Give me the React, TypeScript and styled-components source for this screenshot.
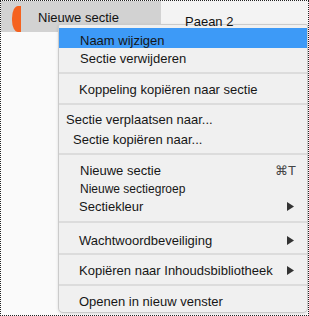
import React from "react";
import styled, { createGlobalStyle } from "styled-components";

const Global = createGlobalStyle`
  html, body { margin: 0; padding: 0; background: #fafafa; }
  body { font-family: "Liberation Sans", Arial, sans-serif; }
`;

const Frame = styled.div`
  position: relative;
  box-sizing: border-box;
  width: 309px;
  height: 316px;
  border: 1px dotted #222;
  background: #fafafa;
  overflow: hidden;
`;

const TopBar = styled.div`
  display: flex;
  height: 31px;
`;

const Tab = styled.div`
  display: flex;
  align-items: center;
  width: 160px;
  background: #d2d2d2;
  padding-left: 11px;
  box-sizing: border-box;
  gap: 17px;
  font-size: 13px;
  color: #111;
`;

const Marker = styled.div`
  width: 9px;
  height: 26px;
  margin-top: 4px;
  background: #f5621f;
  border-radius: 6px 0 0 6px / 12px 0 0 12px;
`;

const TabLabel = styled.span`
  margin-top: 1px;
`;

const Rest = styled.div`
  flex: 1;
  background: #f3f3f3;
  padding-left: 24px;
  padding-top: 13px;
  font-size: 13px;
  color: #111;
`;

const PageLabel = styled.span`
  position: relative;
  z-index: 2;
`;

const Menu = styled.div`
  position: absolute;
  z-index: 1;
  left: 57px;
  top: 23px;
  right: 0;
  box-sizing: border-box;
  background: #f0f0f0;
  border: 1px solid #cbcbcb;
  border-radius: 2px 2px 5px 5px;
  box-shadow: 0 1px 3px rgba(0, 0, 0, 0.12);
  padding: 3px 0 1px;
  font-size: 13px;
  color: #161616;
`;

const Item = styled.div<{ $h?: number; $pt?: number; $indent?: number; $active?: boolean; $small?: boolean }>`
  display: flex;
  align-items: center;
  justify-content: space-between;
  box-sizing: border-box;
  height: ${(p) => p.$h ?? 20}px;
  padding: ${(p) => p.$pt ?? 0}px 13px 0 ${(p) => p.$indent ?? 21}px;
  background: ${(p) => (p.$active ? "#3d9af7" : "transparent")};
  font-size: ${(p) => (p.$small ? 12 : 13)}px;
  white-space: nowrap;
`;

const Separator = styled.div<{ $mt?: number; $mb?: number }>`
  height: 2px;
  background: #dcdcdc;
  margin: ${(p) => p.$mt ?? 4}px 0 ${(p) => p.$mb ?? 5}px;
`;

const Shortcut = styled.span`
  color: #444;
  margin-right: -2px;
`;

const Arrow = () => (
  <svg width="7" height="9" viewBox="0 0 7 9" aria-hidden>
    <polygon points="0,0 7,4.5 0,9" fill="#333" />
  </svg>
);

export default function App() {
  return (
    <>
      <Global />
      <Frame>
        <TopBar>
          <Tab>
            <Marker />
            <TabLabel>Nieuwe sectie</TabLabel>
          </Tab>
          <Rest>
            <PageLabel>Paean 2</PageLabel>
          </Rest>
        </TopBar>
        <Menu>
          <Item $active $pt={4}>Naam wijzigen</Item>
          <Item>Sectie verwijderen</Item>
          <Separator />
          <Item $indent={20}>Koppeling kopiëren naar sectie</Item>
          <Separator />
          <Item $h={19} $indent={7}>Sectie verplaatsen naar...</Item>
          <Item $indent={14}>Sectie kopiëren naar...</Item>
          <Separator />
          <Item>
            <span>Nieuwe sectie</span>
            <Shortcut>⌘T</Shortcut>
          </Item>
          <Item $h={18} $small>Nieuwe sectiegroep</Item>
          <Item $h={16} $indent={20}>
            <span>Sectiekleur</span>
            <Arrow />
          </Item>
          <Separator $mt={7} $mb={7} />
          <Item $indent={20}>
            <span>Wachtwoordbeveiliging</span>
            <Arrow />
          </Item>
          <Separator $mt={3} />
          <Item $indent={20}>
            <span>Kopiëren naar Inhoudsbibliotheek</span>
            <Arrow />
          </Item>
          <Separator />
          <Item $indent={20}>Openen in nieuw venster</Item>
        </Menu>
      </Frame>
    </>
  );
}
